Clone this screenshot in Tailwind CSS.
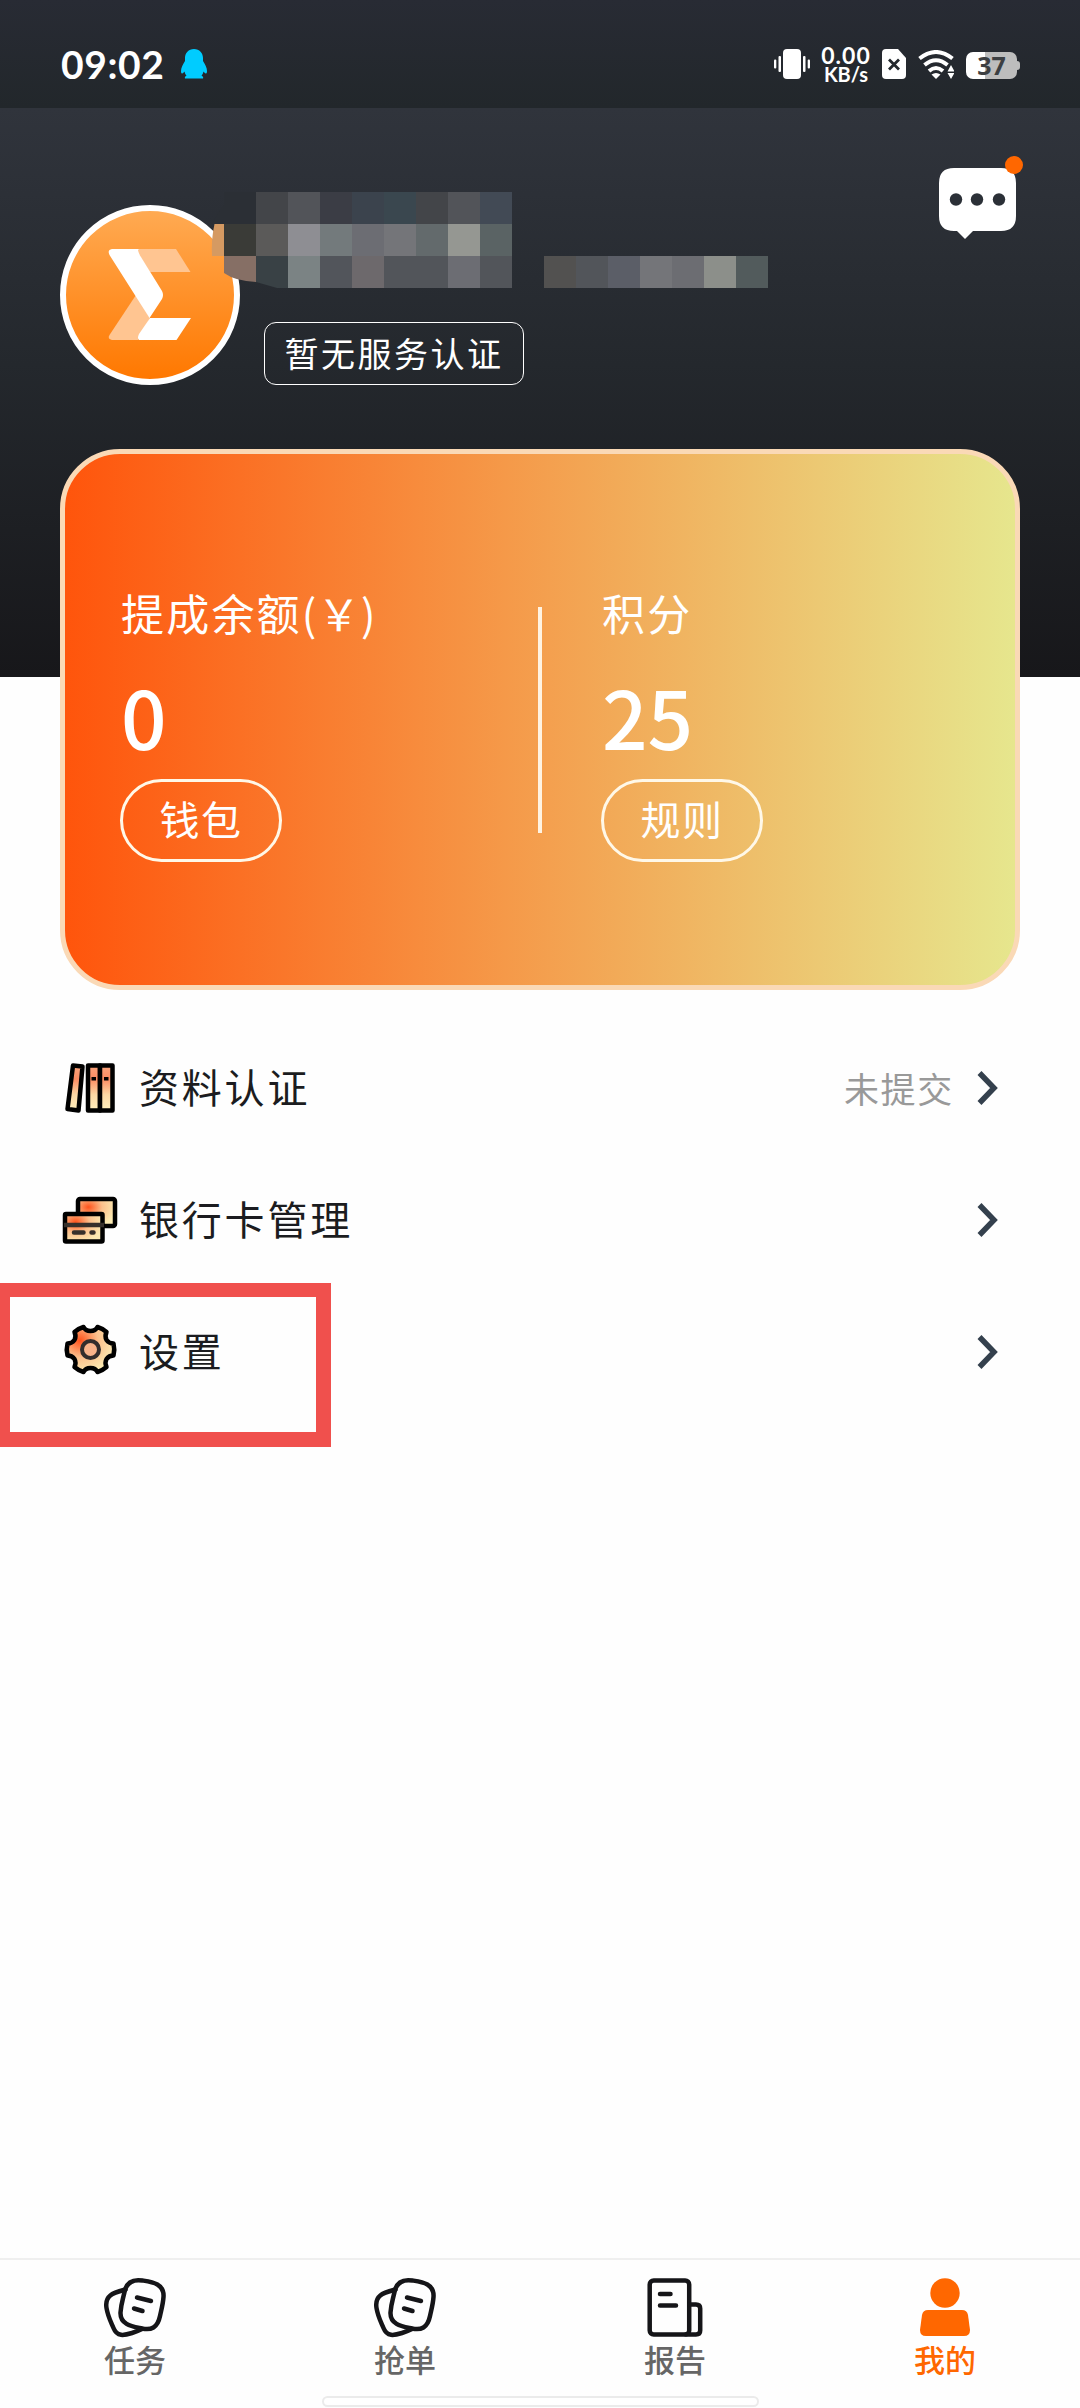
<!DOCTYPE html>
<html lang="zh-CN">
<head>
<meta charset="utf-8">
<title>我的</title>
<script src="https://cdn.jsdelivr.net/npm/@tailwindcss/browser@4"></script>
</head>
<body class="bg-white">
<div class="relative flex h-[2408px] w-[1080px] flex-col overflow-hidden bg-[#fefefe] font-['Noto_Sans_CJK_SC',sans-serif]">

  <!-- Status bar -->
  <div class="flex h-[108px] shrink-0 items-start justify-between bg-linear-to-b/srgb from-[#282b34] to-[#22272b] px-[60px] text-white">
    <div class="flex items-start pt-[44px]">
      <span class="w-[121px] pl-px font-['Lato','Noto_Sans_CJK_SC',sans-serif] text-[39px] leading-[40px] font-bold tracking-[0.600px]">09:02</span>
      <svg class="mt-[5px]" width="26" height="30" viewBox="0 0 26 30"><path fill="#00ccff" d="M13 0C18.500 0 22 4 22 9V12C24 15 26 19 26 22C26 25 25 25.500 22.500 22.500C22 24.500 21.500 25.500 20.500 26.500C22 27.500 22.500 28.500 22 29.500H4C3.500 28.500 4 27.500 5.500 26.500C4.500 25.500 4 24.500 3.500 22.500C1 25.500 0 25 0 22C0 19 2 15 4 12V9C4 4 7.500 0 13 0Z"/></svg>
    </div>
    <div class="flex items-start pt-[45px]">
      <svg class="mt-1 mr-[11px]" width="36" height="30" viewBox="0 0 36 30" fill="#fff"><rect x="9" y="0" width="18" height="30" rx="4"/><rect x="0" y="10.500" width="2.300" height="9" rx="1"/><rect x="4.500" y="7" width="2.500" height="16" rx="1"/><rect x="29" y="7" width="2.500" height="16" rx="1"/><rect x="33.700" y="10.500" width="2.300" height="9" rx="1"/></svg>
      <div class="mr-[11px] flex w-[50px] flex-col items-center font-['Lato',sans-serif] font-bold">
        <span class="text-[23px] leading-[20px] tracking-[1px]">0.00</span>
        <span class="text-[20px] leading-[19px]">KB/s</span>
      </div>
      <svg class="mt-1 mr-3" width="24" height="30" viewBox="0 0 24 30"><path fill="#fff" d="M4 0H16L24 9V26Q24 30 20 30H4Q0 30 0 26V4Q0 0 4 0Z"/><path stroke="#23282d" stroke-width="2.800" d="M7 10.500L17 20.500M17 10.500L7 20.500"/></svg>
      <svg class="mt-[5px] mr-3" width="36" height="29" viewBox="0 0 36 29"><g fill="none" stroke="#fff" stroke-width="4"><path d="M1.500 8.500Q18 -4.500 34.500 8.500"/><path d="M6.500 15Q18 5.500 29.500 15"/><path d="M11 21Q18 15 25 21"/></g><path fill="#fff" d="M13.500 24.500Q18 21.500 22.500 24.500L18 29Z"/><path fill="#23282d" d="M28 21L33 11L38 21V29H28Z"/><path fill="#fff" d="M29.500 21.500L33 15L36.500 21.500ZM29.500 23L33 29L36.500 23Z"/></svg>
      <div class="mt-[7px] flex items-center">
        <div class="flex h-[27px] w-[51px] items-center justify-center rounded-[7px] bg-linear-to-r/srgb from-white from-37% to-[#bdbdbd] to-37% font-['Noto_Sans',sans-serif] text-[25px] leading-none font-bold text-[#3c3f42]">37</div>
        <div class="h-[9px] w-[3px] rounded-r-sm bg-[#bdbdbd]"></div>
      </div>
    </div>
  </div>

  <!-- Profile header -->
  <div class="relative flex h-[569px] shrink-0 flex-col bg-linear-to-b/srgb from-[#30343c] via-[#24282d] via-45% to-[#17171a] px-[60px]">
    <div class="mt-[97px] flex h-[180px]">
      <div class="h-[180px] w-[180px] shrink-0 rounded-full border-[6px] border-white bg-linear-to-b/srgb from-[#ffaa52] to-[#ff7800]">
        <svg width="168" height="168" viewBox="66 211 168 168"><g stroke-linejoin="round"><path fill="#ffc591" d="M139 249H176L190.500 272H150L138 253Z"/><path fill="#ffc591" d="M136 295L150 318L138 340H112Q107 339 109.500 335Z"/><path fill="#fff" d="M112 249H139Q137 251 141 257L162 291Q164 295 162 299L149.500 318L109.500 255Q107 250 112 249Z"/><path fill="#fff" d="M150 318H191L176.500 340H139Q137 338 139 334Z"/></g></svg>
      </div>
      <div class="mt-[117px] ml-6 flex h-[63px] w-[260px] items-center justify-center rounded-xl border-[1.5px] border-white pb-[2px] text-[34px] leading-none tracking-[2.500px] text-white">暂无服务认证</div>
      <svg class="-mt-[43px] -mr-px ml-auto translate-x-[-4px]" width="78" height="78" viewBox="939 162 78 78"><path fill="#fff" d="M954 168H1001Q1016 168 1016 183V216Q1016 231 1001 231H973L965 239L957 231H954Q939 231 939 216V183Q939 168 954 168Z"/><g fill="#2b3037"><circle cx="956" cy="199.500" r="6.200"/><circle cx="977" cy="199.500" r="6.200"/><circle cx="999" cy="199.500" r="6.200"/></g></svg>
    </div>
    <div class="absolute top-[48px] left-[1005px] h-[18px] w-[18px] rounded-full bg-[#ff6700]"></div>

    <!-- Masked account name, drawn over the avatar edge -->
    <svg class="absolute top-[84px] left-[210px]" width="560" height="100" viewBox="210 192 560 100" shape-rendering="crispEdges">
      <path fill="#2b2f35" shape-rendering="auto" d="M224 205V192H256V224H212Q216 216 224 205Z"/>
      <path fill="#d59a62" shape-rendering="auto" d="M214.500 224H224V256H212Q211 240 214.500 224Z"/>
      <path fill="#3a3b37" d="M224 224h32v32h-32z"/>
      <path fill="#866f65" shape-rendering="auto" d="M224 256H256V282Q235 281 224 273Z"/>
      <path fill="#394145" shape-rendering="auto" d="M256 256H288V288H277L256 282Z"/>
      <path fill="#434549" d="M256 192h32v32h-32z"/><path fill="#525459" d="M288 192h32v32h-32z"/><path fill="#3b3d45" d="M320 192h32v32h-32z"/><path fill="#3b434d" d="M352 192h32v32h-32z"/><path fill="#3a474f" d="M384 192h32v32h-32z"/><path fill="#434549" d="M416 192h32v32h-32z"/><path fill="#525459" d="M448 192h32v32h-32z"/><path fill="#424a55" d="M480 192h32v32h-32z"/>
      <path fill="#5b5a59" d="M256 224h32v32h-32z"/><path fill="#8e8e93" d="M288 224h32v32h-32z"/><path fill="#737a7c" d="M320 224h32v32h-32z"/><path fill="#6c6d73" d="M352 224h32v32h-32z"/><path fill="#747579" d="M384 224h32v32h-32z"/><path fill="#636a6c" d="M416 224h32v32h-32z"/><path fill="#959792" d="M448 224h32v32h-32z"/><path fill="#5a6364" d="M480 224h32v32h-32z"/>
      <path fill="#7b8384" d="M288 256h32v32h-32z"/><path fill="#52555b" d="M320 256h32v32h-32z"/><path fill="#6d696c" d="M352 256h32v32h-32z"/><path fill="#52555a" d="M384 256h64v32h-64z"/><path fill="#6c6d73" d="M448 256h32v32h-32z"/><path fill="#52555a" d="M480 256h32v32h-32z"/>
      <path fill="#525150" d="M544 256h32v32h-32z"/><path fill="#52555a" d="M576 256h32v32h-32z"/><path fill="#5b5e67" d="M608 256h32v32h-32z"/><path fill="#747579" d="M640 256h32v32h-32z"/><path fill="#6c6d72" d="M672 256h32v32h-32z"/><path fill="#8c8f8a" d="M704 256h32v32h-32z"/><path fill="#525b5c" d="M736 256h32v32h-32z"/>
    </svg>

    <!-- Balance card -->
    <div class="mt-[64px] flex h-[541px] w-[960px] shrink-0 items-start rounded-[60px] border-[5px] border-[#fad9b6] bg-linear-to-r/srgb from-[#ff540b] via-[#f4a04f] via-51% to-[#e6e78e] bg-origin-border pt-[128px] text-white">
      <div class="w-[473px] pl-[55px]">
        <div class="h-[83px] pl-px text-[43px] leading-[60px] tracking-[2.200px]">提成余额<span class="tracking-[0.800px]">(￥)</span></div>
        <div class="h-[114px] pl-px text-[80px] leading-[100px] font-medium">0</div>
        <div class="flex h-[83px] w-[162px] items-center justify-center rounded-full border-[3px] border-[#fff8e8] pb-[5px] text-[40px] leading-none tracking-[1.500px]">钱包</div>
      </div>
      <div class="mt-[25px] h-[226px] w-1 bg-[#fff3e2]"></div>
      <div class="flex-1 pl-[59px]">
        <div class="h-[83px] pl-px text-[43px] leading-[60px] tracking-[2.200px]">积分</div>
        <div class="h-[114px] pl-px text-[80px] leading-[100px] font-medium">25</div>
        <div class="flex h-[83px] w-[162px] items-center justify-center rounded-full border-[3px] border-[#fff8e8] pb-[5px] text-[40px] leading-none tracking-[1.500px]">规则</div>
      </div>
    </div>
  </div>

  <!-- Menu -->
  <svg class="absolute" width="0" height="0"><defs>
    <linearGradient id="book" x1="0" y1="0" x2="0" y2="1"><stop offset="0" stop-color="#f9a47d"/><stop offset=".3" stop-color="#fb8b62"/><stop offset=".65" stop-color="#fcd8a4"/><stop offset="1" stop-color="#fff0bd"/></linearGradient>
    <radialGradient id="glow" cx=".28" cy=".3" r=".75"><stop offset="0" stop-color="#ff531c"/><stop offset=".5" stop-color="#fcc08c"/><stop offset="1" stop-color="#fbeab2"/></radialGradient>
  </defs></svg>
  <div class="mt-[345px] flex flex-col pr-[80px] pl-[60px] text-[40px] leading-none tracking-[2.800px] text-[#1b1c20]">
    <div class="flex h-[132px] items-center">
      <svg class="mr-[19px]" width="60" height="60" viewBox="60 1058 60 60"><g stroke="#000" stroke-width="4.500" stroke-linejoin="round" fill="url(#book)"><path d="M73 1065.500L82.500 1066.500L78.500 1110.500L67.500 1109Z"/><path d="M88 1065.500H100V1110.500H88Z"/><path d="M100 1065.500H112.500V1110.500H100Z"/></g><path d="M91.500 1077h4.500v3.500h-4.500zM104 1077h4.500v3.500h-4.500z"/></svg>
      <span class="pb-1">资料认证</span>
      <span class="mr-[22px] ml-auto pb-[2px] text-[35px] tracking-[1.700px] text-[#999]">未提交</span>
      <svg width="24" height="36" viewBox="0 0 24 36"><path fill="none" stroke="#34404d" stroke-width="5.500" d="M3.500 3L18 18L3.500 33"/></svg>
    </div>
    <div class="flex h-[132px] items-center">
      <svg class="mr-[19px]" width="60" height="60" viewBox="60 1190 60 60"><g stroke="#000" stroke-width="4.500" stroke-linejoin="round" fill="url(#glow)"><rect x="78" y="1199" width="37" height="27" rx="2"/><rect x="65" y="1214" width="37.500" height="27.500" rx="1"/></g><path stroke="#36302b" stroke-width="4.500" d="M64 1225h40"/><path stroke="#36302b" stroke-width="4.500" stroke-linecap="round" d="M74 1232.500h9.500M91.500 1232.500h2"/></svg>
      <span class="pb-1">银行卡管理</span>
      <svg class="ml-auto" width="24" height="36" viewBox="0 0 24 36"><path fill="none" stroke="#34404d" stroke-width="5.500" d="M3.500 3L18 18L3.500 33"/></svg>
    </div>
    <div class="flex h-[131px] items-center">
      <svg class="mr-[19px]" width="60" height="60" viewBox="-30.500 -27.500 60 60"><path fill="url(#glow)" stroke="#000" stroke-width="4.500" stroke-linejoin="round" d="M-7 -22.500Q-5 -18.500 0 -18.500Q5 -18.500 7 -22.500Q12 -21 16 -17.500Q14 -13 16 -9.500Q18.500 -6 23 -6Q24.500 0 23 6Q18.500 6 16 9.500Q14 13 16 17.500Q12 21 7 22.500Q5 18.500 0 18.500Q-5 18.500 -7 22.500Q-12 21 -16 17.500Q-14 13 -16 9.500Q-18.500 6 -23 6Q-24.500 0 -23 -6Q-18.500 -6 -16 -9.500Q-14 -13 -16 -17.500Q-12 -21 -7 -22.500Z"/><circle r="8.500" fill="#f8b48a" stroke="#332e2c" stroke-width="4"/></svg>
      <span class="pb-1">设置</span>
      <svg class="ml-auto" width="24" height="36" viewBox="0 0 24 36"><path fill="none" stroke="#34404d" stroke-width="5.500" d="M3.500 3L18 18L3.500 33"/></svg>
    </div>
  </div>
  <!-- Highlight frame around the settings row -->
  <div class="absolute top-[1283px] left-0 h-[164px] w-[331px] border-t-[14px] border-r-[15px] border-b-[15px] border-l-[10px] border-[#f0504d]"></div>

  <!-- Tab bar -->
  <div class="mt-auto grid h-[150px] shrink-0 grid-cols-4 border-t-2 border-[#efefef] pt-[16px] text-[31px] leading-[36px] font-medium text-[#666]">
    <div class="flex flex-col items-center gap-px">
      <svg width="64" height="64" viewBox="103 2276 64 64" fill="none" stroke="#151518" stroke-width="4.500" stroke-linecap="round"><path d="M125.500 2289.500C113 2293 104.500 2295 106.500 2308C108 2317 111 2322 113.500 2328C117 2337 124 2335.500 132 2333C136 2331.800 140 2330 142 2329"/><path d="M142.500 2280.500C152 2282 164.500 2283.500 163.500 2297C163 2304 161.500 2309 160 2316C157.500 2328 151 2330.500 142 2328.500C133 2326.500 120 2325 120.500 2312.500C121 2304 123 2299 124.500 2292C126.500 2282 133 2279 142.500 2280.500Z"/><path d="M137 2297.500L151 2301M134 2308.500L142.500 2311"/></svg>
      <span>任务</span>
    </div>
    <div class="flex flex-col items-center gap-px">
      <svg width="64" height="64" viewBox="103 2276 64 64" fill="none" stroke="#151518" stroke-width="4.500" stroke-linecap="round"><path d="M125.500 2289.500C113 2293 104.500 2295 106.500 2308C108 2317 111 2322 113.500 2328C117 2337 124 2335.500 132 2333C136 2331.800 140 2330 142 2329"/><path d="M142.500 2280.500C152 2282 164.500 2283.500 163.500 2297C163 2304 161.500 2309 160 2316C157.500 2328 151 2330.500 142 2328.500C133 2326.500 120 2325 120.500 2312.500C121 2304 123 2299 124.500 2292C126.500 2282 133 2279 142.500 2280.500Z"/><path d="M137 2297.500L151 2301M134 2308.500L142.500 2311"/></svg>
      <span>抢单</span>
    </div>
    <div class="flex flex-col items-center gap-px">
      <svg width="64" height="64" viewBox="643 2276 64 64" fill="none" stroke="#151518" stroke-width="4.500" stroke-linecap="round"><rect x="649.700" y="2280.500" width="39.500" height="54" rx="4"/><path d="M689.500 2304.500H696Q700.200 2304.500 700.200 2308.500V2330.500Q700.200 2334.500 696 2334.500H686M660 2294H670.500M660 2305.500H676"/></svg>
      <span>报告</span>
    </div>
    <div class="flex flex-col items-center gap-px text-[#ff6700]">
      <svg width="64" height="64" viewBox="913 2276 64 64" fill="#ff6700"><circle cx="945" cy="2293" r="14.700"/><path d="M928 2310H962Q967 2310 968 2315L970 2330Q970 2336 964 2336H926Q920 2336 920 2330L922 2315Q923 2310 928 2310Z"/></svg>
      <span>我的</span>
    </div>
  </div>
  <!-- Gesture handle -->
  <div class="absolute top-[2396px] left-[322px] h-[11px] w-[437px] rounded-full border-2 border-[#ebebeb] bg-white"></div>
</div>
</body>
</html>
